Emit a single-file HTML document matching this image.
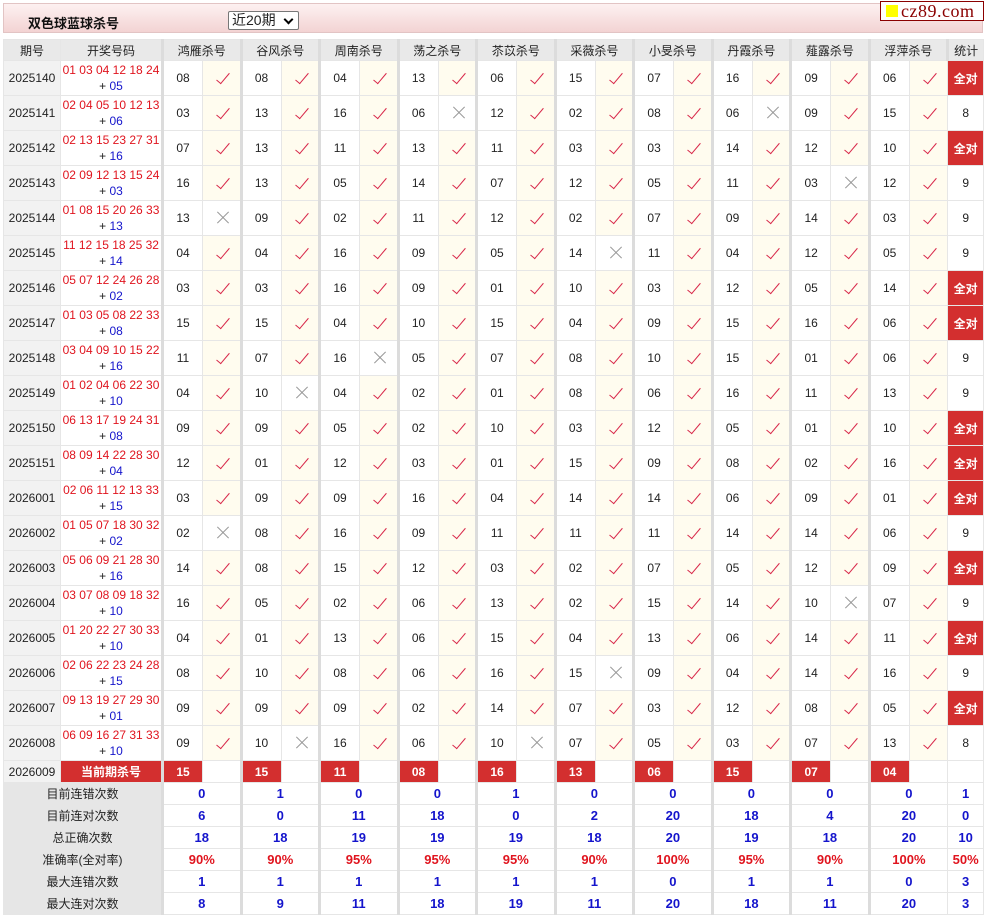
<!DOCTYPE html>
<html><head><meta charset="utf-8">
<style>
body{margin:0;background:#fff;font-family:"Liberation Sans","Noto Sans CJK SC",sans-serif;font-size:12px;color:#222;width:985px;height:916px;overflow:hidden;position:relative}
.bar{position:absolute;left:3px;top:3px;width:980px;height:30px;background:linear-gradient(#fdf1f1,#f3d3d3);border:1px solid #e2c4c4;box-sizing:border-box}
.title{position:absolute;left:24px;top:9px;font-weight:bold;font-size:13px;color:#111}
.sel{position:absolute;left:224px;top:7px;width:71px;height:19px;border:1px solid #777;background:#fff;box-sizing:border-box;font-size:14px;line-height:17px;padding-left:3px;border-radius:2px}
.sel:after{content:"";position:absolute;right:6px;top:4px;width:5px;height:5px;border-right:2px solid #000;border-bottom:2px solid #000;transform:rotate(45deg)}
.logo{position:absolute;left:880px;top:1px;width:104px;height:20px;border:1px solid #8b0000;background:#fff;box-sizing:border-box;font-family:"Liberation Serif",serif;font-size:18px;line-height:18px;color:#8b0000;padding-left:20px;letter-spacing:.5px}
.logo:before{content:"";position:absolute;left:5px;top:3px;width:12px;height:12px;background:#ffff00}
table{position:absolute;left:3px;top:39px;border-collapse:collapse;table-layout:fixed;width:981px}
td{border:1px solid #e6e6e6;text-align:center;padding:0;overflow:hidden;white-space:nowrap;position:relative}
tr.h td{height:20px;background:#e9e9e9;font-size:12px}
tr.d td{height:34px}
td.p{background:#f2f2f2}
td.dr{color:#e0141e;line-height:16px}
td.dr i{color:#222;font-style:normal}
td.dr b{color:#1414cc;font-weight:normal}
td.n{border-left:3px solid #dcdcdc}
tr.h td.g{border-left:3px solid #dcdcdc}
td.y,td.x{background:#fffcef}
td.x{background:#fff}
td.y:after{content:"";position:absolute;left:17px;top:9px;width:5px;height:13px;border-right:1.6px solid #d8284a;border-bottom:1.6px solid #d8284a;transform:rotate(40deg)}
td.x:before,td.x:after{content:"";position:absolute;left:12px;top:16px;width:16px;height:1px;background:#999;transform:rotate(45deg)}
td.x:after{transform:rotate(-45deg)}
td.q{background:#d32f2f;color:#fff;font-weight:bold}
tr.c td{height:21px}
tr.c td.cr{background:#d32f2f;color:#fff;font-weight:bold}
tr.s td{height:21px;font-weight:bold;color:#1414cc;font-size:13px}
tr.s td.l{background:#e6e6e6;color:#222;font-weight:normal;font-size:12px}
tr.s td.v{border-left:3px solid #dcdcdc}
tr.r td{color:#e0141e}
tr.r td.l{color:#222}
</style></head><body>
<div class="bar"><span class="title">双色球蓝球杀号</span><div class="sel">近20期</div></div>
<div class="logo">cz89.com</div>
<table>
<colgroup><col style="width:57px"><col style="width:102px">
<col style="width:40px"><col style="width:38.5px"><col style="width:40px"><col style="width:38.5px"><col style="width:40px"><col style="width:38.5px"><col style="width:40px"><col style="width:38.5px"><col style="width:40px"><col style="width:38.5px"><col style="width:40px"><col style="width:38.5px"><col style="width:40px"><col style="width:38.5px"><col style="width:40px"><col style="width:38.5px"><col style="width:40px"><col style="width:38.5px"><col style="width:40px"><col style="width:38.5px"><col style="width:36px"></colgroup>
<tr class="h"><td>期号</td><td>开奖号码</td><td class="g" colspan="2">鸿雁杀号</td><td class="g" colspan="2">谷风杀号</td><td class="g" colspan="2">周南杀号</td><td class="g" colspan="2">荡之杀号</td><td class="g" colspan="2">苶苡杀号</td><td class="g" colspan="2">采薇杀号</td><td class="g" colspan="2">小旻杀号</td><td class="g" colspan="2">丹霞杀号</td><td class="g" colspan="2">薤露杀号</td><td class="g" colspan="2">浮萍杀号</td><td class="g">统计</td></tr>
<tr class="d"><td class="p">2025140</td><td class="dr">01 03 04 12 18 24<br><i>+</i> <b>05</b></td><td class="n">08</td><td class="y"></td><td class="n">08</td><td class="y"></td><td class="n">04</td><td class="y"></td><td class="n">13</td><td class="y"></td><td class="n">06</td><td class="y"></td><td class="n">15</td><td class="y"></td><td class="n">07</td><td class="y"></td><td class="n">16</td><td class="y"></td><td class="n">09</td><td class="y"></td><td class="n">06</td><td class="y"></td><td class="q">全对</td></tr>
<tr class="d"><td class="p">2025141</td><td class="dr">02 04 05 10 12 13<br><i>+</i> <b>06</b></td><td class="n">03</td><td class="y"></td><td class="n">13</td><td class="y"></td><td class="n">16</td><td class="y"></td><td class="n">06</td><td class="x"></td><td class="n">12</td><td class="y"></td><td class="n">02</td><td class="y"></td><td class="n">08</td><td class="y"></td><td class="n">06</td><td class="x"></td><td class="n">09</td><td class="y"></td><td class="n">15</td><td class="y"></td><td>8</td></tr>
<tr class="d"><td class="p">2025142</td><td class="dr">02 13 15 23 27 31<br><i>+</i> <b>16</b></td><td class="n">07</td><td class="y"></td><td class="n">13</td><td class="y"></td><td class="n">11</td><td class="y"></td><td class="n">13</td><td class="y"></td><td class="n">11</td><td class="y"></td><td class="n">03</td><td class="y"></td><td class="n">03</td><td class="y"></td><td class="n">14</td><td class="y"></td><td class="n">12</td><td class="y"></td><td class="n">10</td><td class="y"></td><td class="q">全对</td></tr>
<tr class="d"><td class="p">2025143</td><td class="dr">02 09 12 13 15 24<br><i>+</i> <b>03</b></td><td class="n">16</td><td class="y"></td><td class="n">13</td><td class="y"></td><td class="n">05</td><td class="y"></td><td class="n">14</td><td class="y"></td><td class="n">07</td><td class="y"></td><td class="n">12</td><td class="y"></td><td class="n">05</td><td class="y"></td><td class="n">11</td><td class="y"></td><td class="n">03</td><td class="x"></td><td class="n">12</td><td class="y"></td><td>9</td></tr>
<tr class="d"><td class="p">2025144</td><td class="dr">01 08 15 20 26 33<br><i>+</i> <b>13</b></td><td class="n">13</td><td class="x"></td><td class="n">09</td><td class="y"></td><td class="n">02</td><td class="y"></td><td class="n">11</td><td class="y"></td><td class="n">12</td><td class="y"></td><td class="n">02</td><td class="y"></td><td class="n">07</td><td class="y"></td><td class="n">09</td><td class="y"></td><td class="n">14</td><td class="y"></td><td class="n">03</td><td class="y"></td><td>9</td></tr>
<tr class="d"><td class="p">2025145</td><td class="dr">11 12 15 18 25 32<br><i>+</i> <b>14</b></td><td class="n">04</td><td class="y"></td><td class="n">04</td><td class="y"></td><td class="n">16</td><td class="y"></td><td class="n">09</td><td class="y"></td><td class="n">05</td><td class="y"></td><td class="n">14</td><td class="x"></td><td class="n">11</td><td class="y"></td><td class="n">04</td><td class="y"></td><td class="n">12</td><td class="y"></td><td class="n">05</td><td class="y"></td><td>9</td></tr>
<tr class="d"><td class="p">2025146</td><td class="dr">05 07 12 24 26 28<br><i>+</i> <b>02</b></td><td class="n">03</td><td class="y"></td><td class="n">03</td><td class="y"></td><td class="n">16</td><td class="y"></td><td class="n">09</td><td class="y"></td><td class="n">01</td><td class="y"></td><td class="n">10</td><td class="y"></td><td class="n">03</td><td class="y"></td><td class="n">12</td><td class="y"></td><td class="n">05</td><td class="y"></td><td class="n">14</td><td class="y"></td><td class="q">全对</td></tr>
<tr class="d"><td class="p">2025147</td><td class="dr">01 03 05 08 22 33<br><i>+</i> <b>08</b></td><td class="n">15</td><td class="y"></td><td class="n">15</td><td class="y"></td><td class="n">04</td><td class="y"></td><td class="n">10</td><td class="y"></td><td class="n">15</td><td class="y"></td><td class="n">04</td><td class="y"></td><td class="n">09</td><td class="y"></td><td class="n">15</td><td class="y"></td><td class="n">16</td><td class="y"></td><td class="n">06</td><td class="y"></td><td class="q">全对</td></tr>
<tr class="d"><td class="p">2025148</td><td class="dr">03 04 09 10 15 22<br><i>+</i> <b>16</b></td><td class="n">11</td><td class="y"></td><td class="n">07</td><td class="y"></td><td class="n">16</td><td class="x"></td><td class="n">05</td><td class="y"></td><td class="n">07</td><td class="y"></td><td class="n">08</td><td class="y"></td><td class="n">10</td><td class="y"></td><td class="n">15</td><td class="y"></td><td class="n">01</td><td class="y"></td><td class="n">06</td><td class="y"></td><td>9</td></tr>
<tr class="d"><td class="p">2025149</td><td class="dr">01 02 04 06 22 30<br><i>+</i> <b>10</b></td><td class="n">04</td><td class="y"></td><td class="n">10</td><td class="x"></td><td class="n">04</td><td class="y"></td><td class="n">02</td><td class="y"></td><td class="n">01</td><td class="y"></td><td class="n">08</td><td class="y"></td><td class="n">06</td><td class="y"></td><td class="n">16</td><td class="y"></td><td class="n">11</td><td class="y"></td><td class="n">13</td><td class="y"></td><td>9</td></tr>
<tr class="d"><td class="p">2025150</td><td class="dr">06 13 17 19 24 31<br><i>+</i> <b>08</b></td><td class="n">09</td><td class="y"></td><td class="n">09</td><td class="y"></td><td class="n">05</td><td class="y"></td><td class="n">02</td><td class="y"></td><td class="n">10</td><td class="y"></td><td class="n">03</td><td class="y"></td><td class="n">12</td><td class="y"></td><td class="n">05</td><td class="y"></td><td class="n">01</td><td class="y"></td><td class="n">10</td><td class="y"></td><td class="q">全对</td></tr>
<tr class="d"><td class="p">2025151</td><td class="dr">08 09 14 22 28 30<br><i>+</i> <b>04</b></td><td class="n">12</td><td class="y"></td><td class="n">01</td><td class="y"></td><td class="n">12</td><td class="y"></td><td class="n">03</td><td class="y"></td><td class="n">01</td><td class="y"></td><td class="n">15</td><td class="y"></td><td class="n">09</td><td class="y"></td><td class="n">08</td><td class="y"></td><td class="n">02</td><td class="y"></td><td class="n">16</td><td class="y"></td><td class="q">全对</td></tr>
<tr class="d"><td class="p">2026001</td><td class="dr">02 06 11 12 13 33<br><i>+</i> <b>15</b></td><td class="n">03</td><td class="y"></td><td class="n">09</td><td class="y"></td><td class="n">09</td><td class="y"></td><td class="n">16</td><td class="y"></td><td class="n">04</td><td class="y"></td><td class="n">14</td><td class="y"></td><td class="n">14</td><td class="y"></td><td class="n">06</td><td class="y"></td><td class="n">09</td><td class="y"></td><td class="n">01</td><td class="y"></td><td class="q">全对</td></tr>
<tr class="d"><td class="p">2026002</td><td class="dr">01 05 07 18 30 32<br><i>+</i> <b>02</b></td><td class="n">02</td><td class="x"></td><td class="n">08</td><td class="y"></td><td class="n">16</td><td class="y"></td><td class="n">09</td><td class="y"></td><td class="n">11</td><td class="y"></td><td class="n">11</td><td class="y"></td><td class="n">11</td><td class="y"></td><td class="n">14</td><td class="y"></td><td class="n">14</td><td class="y"></td><td class="n">06</td><td class="y"></td><td>9</td></tr>
<tr class="d"><td class="p">2026003</td><td class="dr">05 06 09 21 28 30<br><i>+</i> <b>16</b></td><td class="n">14</td><td class="y"></td><td class="n">08</td><td class="y"></td><td class="n">15</td><td class="y"></td><td class="n">12</td><td class="y"></td><td class="n">03</td><td class="y"></td><td class="n">02</td><td class="y"></td><td class="n">07</td><td class="y"></td><td class="n">05</td><td class="y"></td><td class="n">12</td><td class="y"></td><td class="n">09</td><td class="y"></td><td class="q">全对</td></tr>
<tr class="d"><td class="p">2026004</td><td class="dr">03 07 08 09 18 32<br><i>+</i> <b>10</b></td><td class="n">16</td><td class="y"></td><td class="n">05</td><td class="y"></td><td class="n">02</td><td class="y"></td><td class="n">06</td><td class="y"></td><td class="n">13</td><td class="y"></td><td class="n">02</td><td class="y"></td><td class="n">15</td><td class="y"></td><td class="n">14</td><td class="y"></td><td class="n">10</td><td class="x"></td><td class="n">07</td><td class="y"></td><td>9</td></tr>
<tr class="d"><td class="p">2026005</td><td class="dr">01 20 22 27 30 33<br><i>+</i> <b>10</b></td><td class="n">04</td><td class="y"></td><td class="n">01</td><td class="y"></td><td class="n">13</td><td class="y"></td><td class="n">06</td><td class="y"></td><td class="n">15</td><td class="y"></td><td class="n">04</td><td class="y"></td><td class="n">13</td><td class="y"></td><td class="n">06</td><td class="y"></td><td class="n">14</td><td class="y"></td><td class="n">11</td><td class="y"></td><td class="q">全对</td></tr>
<tr class="d"><td class="p">2026006</td><td class="dr">02 06 22 23 24 28<br><i>+</i> <b>15</b></td><td class="n">08</td><td class="y"></td><td class="n">10</td><td class="y"></td><td class="n">08</td><td class="y"></td><td class="n">06</td><td class="y"></td><td class="n">16</td><td class="y"></td><td class="n">15</td><td class="x"></td><td class="n">09</td><td class="y"></td><td class="n">04</td><td class="y"></td><td class="n">14</td><td class="y"></td><td class="n">16</td><td class="y"></td><td>9</td></tr>
<tr class="d"><td class="p">2026007</td><td class="dr">09 13 19 27 29 30<br><i>+</i> <b>01</b></td><td class="n">09</td><td class="y"></td><td class="n">09</td><td class="y"></td><td class="n">09</td><td class="y"></td><td class="n">02</td><td class="y"></td><td class="n">14</td><td class="y"></td><td class="n">07</td><td class="y"></td><td class="n">03</td><td class="y"></td><td class="n">12</td><td class="y"></td><td class="n">08</td><td class="y"></td><td class="n">05</td><td class="y"></td><td class="q">全对</td></tr>
<tr class="d"><td class="p">2026008</td><td class="dr">06 09 16 27 31 33<br><i>+</i> <b>10</b></td><td class="n">09</td><td class="y"></td><td class="n">10</td><td class="x"></td><td class="n">16</td><td class="y"></td><td class="n">06</td><td class="y"></td><td class="n">10</td><td class="x"></td><td class="n">07</td><td class="y"></td><td class="n">05</td><td class="y"></td><td class="n">03</td><td class="y"></td><td class="n">07</td><td class="y"></td><td class="n">13</td><td class="y"></td><td>8</td></tr>
<tr class="c"><td class="p">2026009</td><td class="cr">当前期杀号</td><td class="n cr">15</td><td></td><td class="n cr">15</td><td></td><td class="n cr">11</td><td></td><td class="n cr">08</td><td></td><td class="n cr">16</td><td></td><td class="n cr">13</td><td></td><td class="n cr">06</td><td></td><td class="n cr">15</td><td></td><td class="n cr">07</td><td></td><td class="n cr">04</td><td></td><td></td></tr>
<tr class="s"><td class="l" colspan="2">目前连错次数</td><td class="v" colspan="2">0</td><td class="v" colspan="2">1</td><td class="v" colspan="2">0</td><td class="v" colspan="2">0</td><td class="v" colspan="2">1</td><td class="v" colspan="2">0</td><td class="v" colspan="2">0</td><td class="v" colspan="2">0</td><td class="v" colspan="2">0</td><td class="v" colspan="2">0</td><td>1</td></tr>
<tr class="s"><td class="l" colspan="2">目前连对次数</td><td class="v" colspan="2">6</td><td class="v" colspan="2">0</td><td class="v" colspan="2">11</td><td class="v" colspan="2">18</td><td class="v" colspan="2">0</td><td class="v" colspan="2">2</td><td class="v" colspan="2">20</td><td class="v" colspan="2">18</td><td class="v" colspan="2">4</td><td class="v" colspan="2">20</td><td>0</td></tr>
<tr class="s"><td class="l" colspan="2">总正确次数</td><td class="v" colspan="2">18</td><td class="v" colspan="2">18</td><td class="v" colspan="2">19</td><td class="v" colspan="2">19</td><td class="v" colspan="2">19</td><td class="v" colspan="2">18</td><td class="v" colspan="2">20</td><td class="v" colspan="2">19</td><td class="v" colspan="2">18</td><td class="v" colspan="2">20</td><td>10</td></tr>
<tr class="s r"><td class="l" colspan="2">准确率(全对率)</td><td class="v" colspan="2">90%</td><td class="v" colspan="2">90%</td><td class="v" colspan="2">95%</td><td class="v" colspan="2">95%</td><td class="v" colspan="2">95%</td><td class="v" colspan="2">90%</td><td class="v" colspan="2">100%</td><td class="v" colspan="2">95%</td><td class="v" colspan="2">90%</td><td class="v" colspan="2">100%</td><td>50%</td></tr>
<tr class="s"><td class="l" colspan="2">最大连错次数</td><td class="v" colspan="2">1</td><td class="v" colspan="2">1</td><td class="v" colspan="2">1</td><td class="v" colspan="2">1</td><td class="v" colspan="2">1</td><td class="v" colspan="2">1</td><td class="v" colspan="2">0</td><td class="v" colspan="2">1</td><td class="v" colspan="2">1</td><td class="v" colspan="2">0</td><td>3</td></tr>
<tr class="s"><td class="l" colspan="2">最大连对次数</td><td class="v" colspan="2">8</td><td class="v" colspan="2">9</td><td class="v" colspan="2">11</td><td class="v" colspan="2">18</td><td class="v" colspan="2">19</td><td class="v" colspan="2">11</td><td class="v" colspan="2">20</td><td class="v" colspan="2">18</td><td class="v" colspan="2">11</td><td class="v" colspan="2">20</td><td>3</td></tr>
</table>
</body></html>
